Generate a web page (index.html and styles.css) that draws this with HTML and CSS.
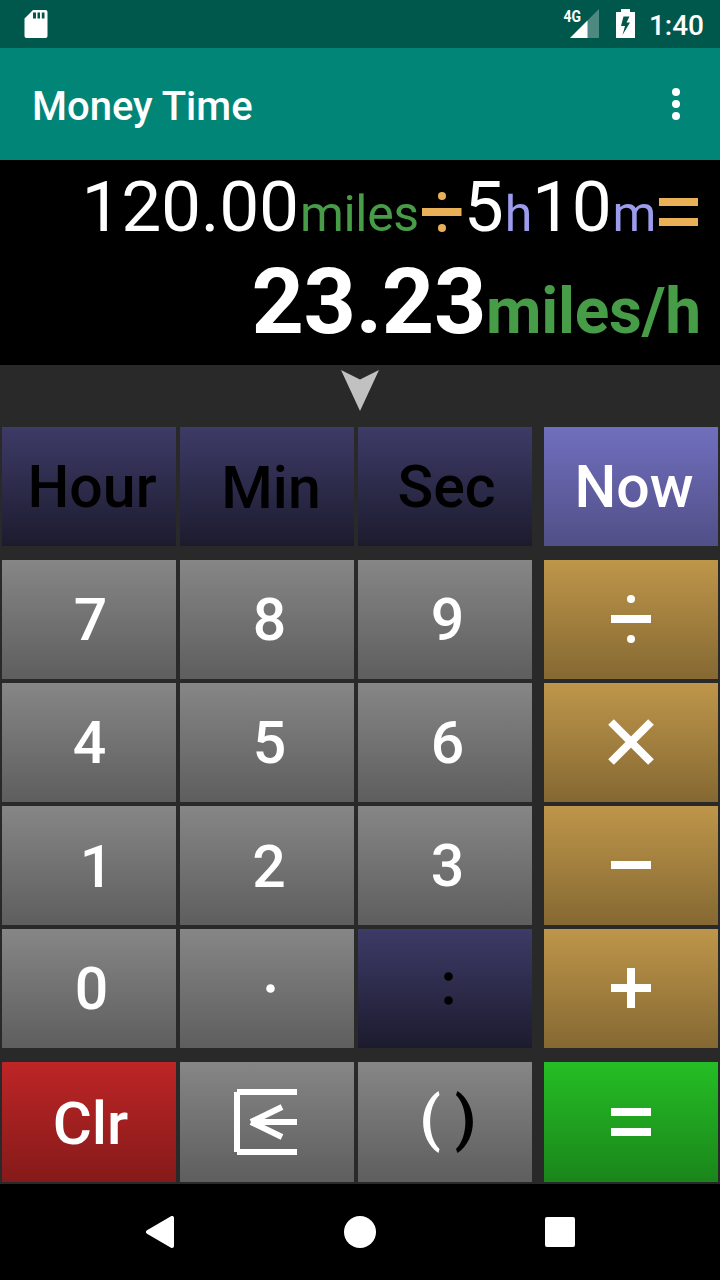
FILE: index.html
```html
<!DOCTYPE html>
<html lang="en">
<head>
<meta charset="utf-8">
<title>Money Time</title>
<link rel="stylesheet" href="styles.css">
</head>
<body>
<div class="screen">
  <header class="status">
    <svg class="sd" width="24" height="28" viewBox="0 0 24 28"><path fill="#fff" fill-rule="evenodd" d="M9 0H21.500Q23.500 0 23.500 2V26Q23.500 28 21.500 28H2.500Q.5 28 .5 26V8.500ZM9 2.500V8.500H12V2.500ZM13.500 2.500V8.500H16V2.500ZM17.800 2.500V8.500H20.500V2.500Z"/></svg>
    <svg class="signal" width="37" height="42" viewBox="0 -6 37 42"><path fill="#fff" fill-opacity=".3" d="M36 0V29H7Z"/><path fill="#fff" d="M24.500 11.500V29H7Z"/><text class="net" x="0.500" y="13.200" textLength="17.500" lengthAdjust="spacingAndGlyphs">4G</text></svg>
    <svg class="battery" width="19" height="29" viewBox="0 0 19 29"><path fill="#fff" fill-rule="evenodd" d="M5 0H14V3H19V29H0V3H5ZM7.500 7.500L5 17H9L6.500 26L14 13.500H10.500L13.500 7.500Z"/></svg>
    <span class="clock">1:40</span>
  </header>
  <div class="appbar">
    <h1 class="title">Money Time</h1>
    <svg width="8" height="32" viewBox="0 0 8 32" fill="#fff"><circle cx="4" cy="4" r="4"/><circle cx="4" cy="16" r="4"/><circle cx="4" cy="28" r="4"/></svg>
  </div>
  <section class="display">
    <div class="expr"><span class="num">120.00</span><span class="unit dist">miles</span><svg class="op" width="40" height="40" viewBox="0 0 40 40" fill="#e9b058"><path d="M0 16H39.500V24H0Z"/><circle cx="20" cy="4" r="4"/><circle cx="20" cy="36" r="4"/></svg><span class="num">5</span><span class="unit time">h</span><span class="num">10</span><span class="unit time">m</span><svg class="op" width="40" height="40" viewBox="0 0 40 40" fill="#e9b058"><path d="M0 6H39V14H0ZM0 26H39V34H0Z"/></svg></div>
    <div class="result"><span class="num">23.23</span><span class="unit dist">miles/h</span></div>
  </section>
  <main class="keypad">
    <div class="pull"><svg width="38" height="41" viewBox="0 0 38 41"><path fill="#c1c1c1" d="M0 0L19 9.500L38 0L19 41Z"/></svg></div>
    <div class="row top">
      <button class="key dim"><span class="l-hour">Hour</span></button>
      <button class="key dim"><span class="l-min">Min</span></button>
      <button class="key dim"><span class="l-sec">Sec</span></button>
      <button class="key now"><span class="l-now">Now</span></button>
    </div>
    <div class="row"><button class="key"><span class="l-seven">7</span></button><button class="key"><span class="l-mid">8</span></button><button class="key"><span class="l-mid">9</span></button>
      <button class="key op-key"><svg width="40" height="48" viewBox="0 0 40 48" fill="#fff"><path d="M0 20H40V28H0Z"/><circle cx="20" cy="4" r="4"/><circle cx="20" cy="44" r="4"/></svg></button></div>
    <div class="row"><button class="key"><span class="l-four">4</span></button><button class="key"><span class="l-mid">5</span></button><button class="key"><span class="l-mid">6</span></button>
      <button class="key op-key"><svg width="46" height="46" viewBox="0 0 46 46" stroke="#fff" stroke-width="8"><path d="M3 3L43 43M43 3L3 43"/></svg></button></div>
    <div class="row"><button class="key"><span class="l-one">1</span></button><button class="key"><span class="l-two">2</span></button><button class="key"><span class="l-mid">3</span></button>
      <button class="key op-key"><svg width="40" height="8" viewBox="0 0 40 8" fill="#fff"><path d="M0 0H40V8H0Z"/></svg></button></div>
    <div class="row"><button class="key"><span class="l-mid">0</span></button>
      <button class="key"><svg class="dots" width="9" height="9" viewBox="0 0 9 9" fill="#fff"><circle cx="4.500" cy="4.500" r="4.300"/></svg></button>
      <button class="key dim"><svg class="dots" width="9" height="33" viewBox="0 0 9 33" fill="#000"><circle cx="4.500" cy="4.500" r="4.300"/><circle cx="4.500" cy="28.500" r="4.300"/></svg></button>
      <button class="key op-key"><svg width="40" height="40" viewBox="0 0 40 40" fill="#fff"><path d="M0 16H16V0H24V16H40V24H24V40H16V24H0Z"/></svg></button></div>
    <div class="row last">
      <button class="key clear"><span class="l-clr">Clr</span></button>
      <button class="key"><svg width="66" height="66" viewBox="0 0 66 66" fill="none" stroke="#fff" stroke-width="6"><path d="M3 3H63M3 63H63M3 3V63M17 33H63M17 33L48 18M17 33L48 48"/></svg></button>
      <button class="key"><svg class="paren" width="52" height="62" viewBox="0 0 52 62"><path fill="#fff" d="M16.500 0C-4 14 -4 48 16.500 62L17.500 58C5 46 5 16 17.500 4Z"/><path fill="#000" d="M35.500 0C56 14 56 48 35.500 62L34 58C46.500 46 46.500 16 34 4Z"/></svg></button>
      <button class="key equals"><svg width="40" height="28" viewBox="0 0 40 28" fill="#fff"><path d="M0 0H40V8H0ZM0 20H40V28H0Z"/></svg></button>
    </div>
  </main>
  <nav class="nav">
    <svg width="30" height="32" viewBox="0 0 30 32"><path fill="#fff" stroke="#fff" stroke-width="4" stroke-linejoin="round" d="M27 2V30L3 16Z"/></svg>
    <svg width="32" height="32" viewBox="0 0 32 32"><circle cx="16" cy="16" r="16" fill="#fff"/></svg>
    <svg width="30" height="30" viewBox="0 0 30 30"><rect width="30" height="30" rx="2" fill="#fff"/></svg>
  </nav>
</div>
</body>
</html>
```
FILE: styles.css
```css
* { box-sizing: border-box; }
body { margin: 0; background: #000; font-family: Roboto, sans-serif; color: #fff; }
svg { display: block; flex: none; }
.screen { width: 720px; height: 1280px; display: flex; flex-direction: column; overflow: hidden; }

.status { height: 48px; background: #00574b; display: flex; align-items: center; padding: 0 16px 0 24px; }
.signal { margin-left: auto; margin-right: 16px; }
.net { font-size: 17px; font-weight: 700; fill: #fff; }
.battery { margin-top: -2px; margin-right: 14px; }
.clock { font-size: 28px; font-weight: 500; line-height: 44px; padding-top: 4px; }

.appbar { height: 112px; background: #008577; display: flex; align-items: center; justify-content: space-between; padding: 0 40px 0 32px; }
.title { margin: 0; padding-top: 6px; font-size: 40px; font-weight: 500; line-height: 48px; }

.display { height: 205px; background: #000; padding-right: 19px; }
.expr, .result { display: flex; justify-content: flex-end; align-items: baseline; white-space: nowrap; }
.expr .num { font-size: 71.300px; line-height: 93px; letter-spacing: -0.300px; margin-right: 1px; }
.expr .unit { font-size: 50px; line-height: 50px; letter-spacing: -0.300px; }
.op { align-self: flex-start; margin: 32px 2px 0 3px; }
.result { font-weight: 700; }
.result .num { font-size: 91.500px; line-height: 97px; letter-spacing: -0.400px; }
.result .unit { font-size: 64px; line-height: 64px; letter-spacing: -0.200px; }
.dist { color: #479d47; }
.time { color: #9c9bee; }

.keypad { height: 819px; background: #292929; padding: 0 2px 2px; }
.pull { height: 62px; padding: 5px 0 0; display: flex; justify-content: center; }
.row { display: flex; gap: 4px; height: 119px; margin-bottom: 4px; }
.row.top { margin-bottom: 14px; }
.row.last { height: 120px; margin-top: 14px; margin-bottom: 0; }
.key { width: 174px; height: 100%; padding: 0; border: 0; display: flex; align-items: center; justify-content: center; font: 500 59px/119px Roboto, sans-serif; color: #fff; background: linear-gradient(#868686, #5e5e5e); }
.key:last-child { margin-left: 8px; }
.dim { color: #000; background: linear-gradient(#3d3b67, #1c1b2e); }
.now { background: linear-gradient(#706fbe, #514f87); }
.op-key { background: linear-gradient(#be964a, #856832); padding-bottom: 2px; }
.clear { background: linear-gradient(#be2526, #851a1a); }
.equals { background: linear-gradient(#25be25, #1a851a); }

/* Optical offsets of the key labels */
.l-hour { padding-left: 6px; }
.l-min { padding: 2px 0 0 8px; }
.l-sec { padding-left: 3px; }
.l-now { padding-left: 6px; }
.l-seven { padding-left: 3px; }
.l-four { padding-left: 1px; }
.l-mid { margin-left: 5px; }
.dots { margin-left: 6px; }
.l-one { padding: 2px 0 0 15px; }
.l-two { padding: 2px 0 0 4px; }
.l-clr { padding: 2px 0 0 3px; font-size: 60px; }
.paren { margin-left: 6px; }

.nav { height: 96px; background: #000; display: flex; align-items: center; justify-content: space-between; padding: 0 145px; }
```
